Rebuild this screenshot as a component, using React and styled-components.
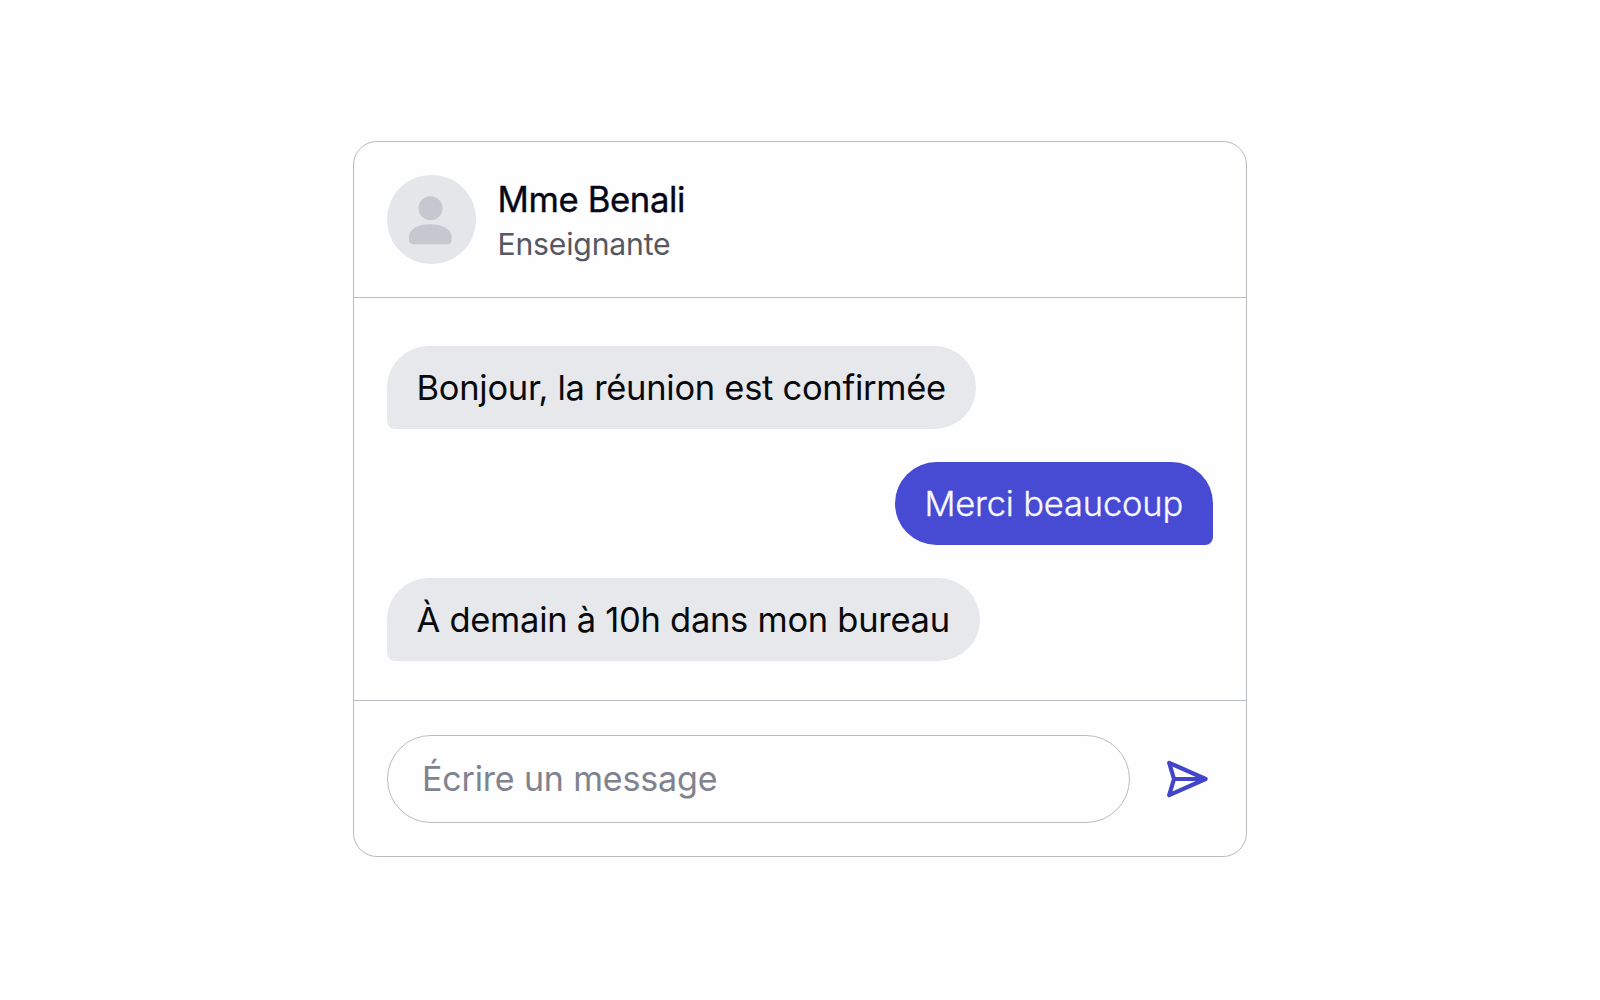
import React from "react";
import styled, { createGlobalStyle } from "styled-components";

const GlobalStyle = createGlobalStyle`
  * {
    box-sizing: border-box;
  }

  body {
    margin: 0;
    background-color: #fefefe;
    font-family: Inter, "Liberation Sans", sans-serif;
  }
`;

const Container = styled.div`
  display: flex;
  justify-content: center;
  height: 1000px;
  padding-top: 141px;
`;

const Card = styled.div`
  display: flex;
  flex-direction: column;
  width: 894px;
  height: 716px;
  border: 1px solid #b8bcc1;
  border-radius: 24px;
`;

const Header = styled.div`
  display: flex;
  align-items: center;
  gap: 22px;
  height: 156px;
  padding: 0 33px;
  border-bottom: 1px solid #b8bcc1;
`;

const Avatar = styled.div`
  display: flex;
  align-items: center;
  justify-content: center;
  width: 88.5px;
  height: 88.5px;
  border-radius: 50%;
  background-color: #e5e6ea;
`;

const Details = styled.div`
  display: flex;
  flex-direction: column;
  padding-top: 4px;
`;

const Name = styled.span`
  font-size: 34.7px;
  line-height: 45px;
  letter-spacing: -0.38px;
  color: #06081a;
  -webkit-text-stroke: 0.4px #06081a;
`;

const Role = styled.span`
  font-size: 30.2px;
  line-height: 44px;
  letter-spacing: -0.2px;
  color: #555862;
`;

const Messages = styled.div`
  flex: 1;
  display: flex;
  flex-direction: column;
  gap: 33px;
  padding: 48px 33px 0;
`;

const Bubble = styled.div`
  align-self: ${(props) => (props.$mine ? "flex-end" : "flex-start")};
  height: 83px;
  padding: 0 30px 0 29.5px;
  border-radius: ${(props) => (props.$mine ? "42px 42px 8px 42px" : "42px 42px 42px 8px")};
  background-color: ${(props) => (props.$mine ? "#474ad3" : "#e7e8eb")};
  color: ${(props) => (props.$mine ? "#f8f8ff" : "#08090c")};
  font-size: 34.5px;
  font-weight: ${(props) => (props.$mine ? 300 : 400)};
  letter-spacing: ${(props) => (props.$mine ? "-0.18px" : "-0.28px")};
  line-height: 83px;
  white-space: nowrap;
  -webkit-text-stroke: ${(props) => props.$mine && "0.35px #f8f8ff"};
`;

const Footer = styled.div`
  display: flex;
  align-items: center;
  gap: 36px;
  height: 156px;
  padding: 0 33px;
  border-top: 1px solid #b8bcc1;
`;

const Input = styled.input`
  width: 743px;
  height: 88px;
  padding: 0 34px;
  border: 1px solid #b8bcc1;
  border-radius: 44px;
  outline: none;
  background: transparent;
  font-family: inherit;
  font-size: 34px;
  letter-spacing: -0.16px;

  &::placeholder {
    color: #80838f;
    opacity: 1;
  }
`;

const SendButton = styled.button`
  display: flex;
  padding: 0;
  border: none;
  background: none;
  color: #4345c9;
  cursor: pointer;
`;

const messages = [
  { text: "Bonjour, la réunion est confirmée" },
  { text: "Merci beaucoup", mine: true },
  { text: "À demain à 10h dans mon bureau" },
];

const App = () => {
  return (
    <Container>
      <GlobalStyle />
      <Card>
        <Header>
          <Avatar>
            <svg width="44" height="50" viewBox="0 0 44 50" fill="#c6c8d0">
              <circle cx="21.5" cy="13.2" r="12" />
              <path d="M0 42C0 34 9.5 29.3 21.2 29.3S42.5 34 42.5 42V45Q42.5 49.2 38 49.2H5Q0 49.2 0 45Z" />
            </svg>
          </Avatar>
          <Details>
            <Name>Mme Benali</Name>
            <Role>Enseignante</Role>
          </Details>
        </Header>

        <Messages>
          {messages.map((message, i) => (
            <Bubble key={i} $mine={message.mine}>
              {message.text}
            </Bubble>
          ))}
        </Messages>

        <Footer>
          <Input placeholder="Écrire un message" />
          <SendButton>
            <svg width="42" height="38" viewBox="0 0 42 38" fill="none" stroke="currentColor" strokeWidth="4.2" strokeLinecap="round" strokeLinejoin="round">
              <path d="M3.2 2.8L39.6 19L3.2 35.2L8 19ZM8 19H38" />
              <path d="M33 17.5L38 19L33 20.5" />
            </svg>
          </SendButton>
        </Footer>
      </Card>
    </Container>
  );
};

export default App;
